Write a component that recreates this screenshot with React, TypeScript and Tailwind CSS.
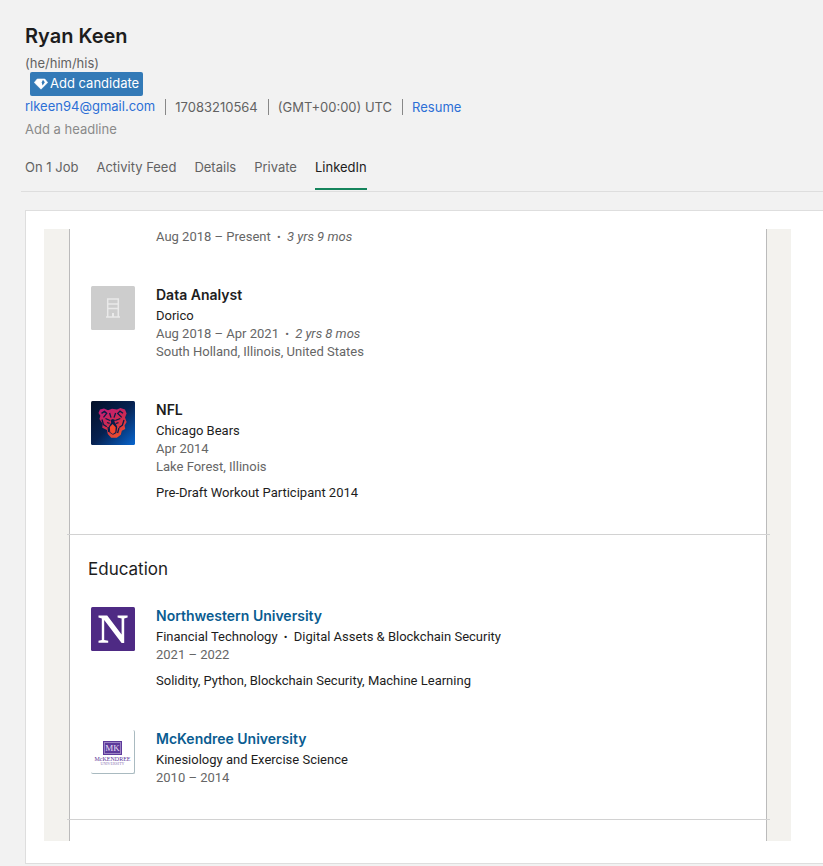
import type { ReactNode } from "react";

type Entry = {
  title: string;
  subtitle: ReactNode;
  dates: ReactNode;
  place?: string;
  note?: string;
  logo: ReactNode;
};

const Dot = () => <span className="px-[3px] text-[11px] leading-none">•</span>;

const GemIcon = () => (
  <svg viewBox="0 0 14 12" className="h-3 w-3.5" aria-hidden="true">
    <path d="M3.2 1h7.6L13.7 4.6 7 11.2.3 4.6z" fill="#fff" stroke="#fff" strokeWidth=".6" strokeLinejoin="round" />
    <path d="M9 1.8 10.8 4.3 8.6 7.4 7.7 4.4z" fill="#337ab7" />
  </svg>
);

const CompanyLogo = () => (
  <svg viewBox="0 0 44 44" className="size-11" role="img" aria-label="Dorico">
    <rect width="44" height="44" rx="1.5" fill="#cdcdcd" />
    <g fill="none" stroke="#e9e9e9" strokeWidth="1.5">
      <path d="M16.7 31V13h10.6v18M15 31h14M17 18h10M17 22.5h10" />
      <path d="M22 31v-4" strokeWidth="2" />
    </g>
  </svg>
);

const BearsLogo = () => (
  <svg viewBox="0 0 44 44" className="size-11" role="img" aria-label="Chicago Bears">
    <defs>
      <linearGradient id="night" x1="0" y1="0" x2="1" y2="1">
        <stop offset="0" stopColor="#041027" />
        <stop offset=".5" stopColor="#062150" />
        <stop offset="1" stopColor="#0866d0" />
      </linearGradient>
      <linearGradient id="fur" x1="0" y1="0" x2=".5" y2="1">
        <stop offset="0" stopColor="#c01b7c" />
        <stop offset=".6" stopColor="#cf2b50" />
        <stop offset="1" stopColor="#e84b32" />
      </linearGradient>
    </defs>
    <rect width="44" height="44" rx="1.5" fill="url(#night)" />
    <path
      fill="url(#fur)"
      d="M7.5 12 9 8.6 13 7.4l4 1.9 4-1.5 5 .6 3.4-1.4 4.6 1.6 1.6 4-1.6 3.8 1.6 4.6-2 3.4.6 3.5-3.4 1.8-1 4-4 3.1h-5.6l-3.4-3.7-.8-4-4.7-2.4.3-4L8.4 18l1-3.3z"
    />
    <path
      fill="none"
      stroke="#081c49"
      strokeWidth="1.3"
      d="m10.5 12.4 3-2 2.2 2-3.2 4M11 18.5l1.4 5 3.4 2.2M32 12.2l-3-2-2.3 2.2 4 4M33 19l-1.6 5.2-3.2 2.3M18.6 12l1.4 4.6M24.6 12l-1.6 4.6M14.5 17.5l4.6 2M29.3 17.5l-5 2M16 21.5l2.6.8M27.5 21.7l-2.7.8M17 26l.8 5M28 27l-1.4 5"
    />
    <path fill="#081c49" d="m19.6 19 2.2-1L24 19l-.6 1.8 1.8 3 1 2.2-.8 6-3.4 1.8-3.6-2.2-.8-5.4 2.6-4.6z" />
    <path fill="#f4482f" d="m18.8 26 2.8-3 3.1 3.2-.4 5-2.4 1.8-2.7-1.8z" />
  </svg>
);

const NorthwesternLogo = () => (
  <svg viewBox="0 0 44 44" className="size-11" role="img" aria-label="Northwestern University">
    <rect width="44" height="44" rx="1.5" fill="#4e2a84" />
    <path
      fill="#fff"
      d="M7.5 8.5h8.7L30.6 27.5V11.5l-4-.9V8.5h10v2.1l-3.4.9V36h-2.6L13.2 13v20l4 .7v2H7.5v-2l3.3-.8V11.5l-3.3-.9z"
    />
  </svg>
);

const McKendreeLogo = () => (
  <span className="flex size-11 flex-col items-center rounded-xs border-r border-b border-[#a9bac0] bg-white pt-[11px] font-['Liberation_Serif',serif] text-[#5b3598]">
    <span className="flex h-3.5 w-[19px] items-center justify-center bg-[#5d3a9b] text-[9px] leading-none text-[#e6dcf5] outline-1 -outline-offset-2 outline-[#9c84c4]">
      MK
    </span>
    <span className="mt-px text-[6px] leading-[6px]">McKENDREE</span>
    <span className="text-[4px] leading-[4px] text-[#8d75b5]">UNIVERSITY</span>
  </span>
);

const jobs: Entry[] = [
  {
    title: "Data Analyst",
    subtitle: "Dorico",
    dates: <>Aug 2018 – Apr 2021 <Dot /> <em>2 yrs 8 mos</em></>,
    place: "South Holland, Illinois, United States",
    logo: <CompanyLogo />,
  },
  {
    title: "NFL",
    subtitle: "Chicago Bears",
    dates: "Apr 2014",
    place: "Lake Forest, Illinois",
    note: "Pre-Draft Workout Participant 2014",
    logo: <BearsLogo />,
  },
];

const schools: Entry[] = [
  {
    title: "Northwestern University",
    subtitle: <>Financial Technology <Dot /> Digital Assets &amp; Blockchain Security</>,
    dates: "2021 – 2022",
    note: "Solidity, Python, Blockchain Security, Machine Learning",
    logo: <NorthwesternLogo />,
  },
  {
    title: "McKendree University",
    subtitle: "Kinesiology and Exercise Science",
    dates: "2010 – 2014",
    logo: <McKendreeLogo />,
  },
];

function EntryRow({ entry, linked = false }: { entry: Entry; linked?: boolean }) {
  return (
    <li className="flex gap-[21px]">
      <div className="shrink-0 pt-[3px]">{entry.logo}</div>
      <div>
        <h3 className="font-[Inter,sans-serif] text-sm leading-6 font-semibold">
          {linked ? <a href="#school" className="text-[#0a5c91]">{entry.title}</a> : entry.title}
        </h3>
        <p>{entry.subtitle}</p>
        <p className="text-[#666]">{entry.dates}</p>
        {entry.place && <p className="text-[#666]">{entry.place}</p>}
        {entry.note && <p className="mt-2">{entry.note}</p>}
      </div>
    </li>
  );
}

const tabs = ["On 1 Job", "Activity Feed", "Details", "Private", "LinkedIn"];

export default function App() {
  return (
    <div className="min-h-screen overflow-hidden bg-[#f2f2f2] pb-0.5 font-[Inter,sans-serif] text-[13px] text-[#1d1d1d]">
      <header className="pt-[22px] pl-[25px] text-[#626262]">
        <h1 className="text-xl leading-7 font-semibold text-[#1d1d1d]">Ryan Keen</h1>
        <p className="mt-1 leading-[18px]">(he/him/his)</p>
        <button className="ml-[5px] flex h-6 items-center gap-0.5 rounded-xs bg-[#337ab7] px-1 text-white">
          <GemIcon />
          Add candidate
        </button>
        <ul className="flex h-[22px] items-center">
          <li><a href="#email" className="text-[#2c6fd6]">rlkeen94@gmail.com</a></li>
          <li className="ml-2.5 border-l border-[#888] pl-[9px] leading-4">17083210564</li>
          <li className="ml-2.5 border-l border-[#888] pl-[9px] leading-4">(GMT+00:00) UTC</li>
          <li className="ml-2.5 border-l border-[#888] pl-[9px] leading-4"><a href="#resume" className="text-[#2c6fd6]">Resume</a></li>
        </ul>
        <p className="leading-[22px] text-[#8a8a8a]">Add a headline</p>
      </header>

      <nav className="mt-3 ml-[21px] flex gap-[18px] border-b border-[#dedede] pl-1 text-[#626262]">
        {tabs.map((tab) => (
          <a
            key={tab}
            href="#tab"
            aria-current={tab === "LinkedIn" ? "page" : undefined}
            className="mb-px border-b-2 border-transparent pt-1.5 pb-3 leading-[18px] aria-[current=page]:border-[#15845c] aria-[current=page]:text-[#1d1d1d]"
          >
            {tab}
          </a>
        ))}
      </nav>

      <main className="mt-[18px] ml-[25px] border-y border-l border-[#dedede] bg-white pt-[18px] pb-[22px] pl-[18px]">
        <div className="max-w-[747px] overflow-hidden bg-[#f3f2ee] pr-6 pl-[25px] font-[Roboto,sans-serif] leading-[18px]">
          <div className="border-x border-[#bbb] bg-white pb-[21px]">
            <section className="pb-8 pl-[21px]">
              <p className="-mt-px pl-[65px] text-[#666]">
                Aug 2018 – Present <Dot /> <em>3 yrs 9 mos</em>
              </p>
              <ul className="mt-[37px] flex flex-col gap-[37px]">
                {jobs.map((job) => <EntryRow key={job.title} entry={job} />)}
              </ul>
            </section>
            <hr className="-mr-1 -ml-[3px] border-[#d2d2d2]" />
            <section className="pt-5 pb-8 pl-[21px]">
              <h2 className="-ml-[3px] font-[Inter,sans-serif] text-[17px] leading-7">Education</h2>
              <ul className="mt-[21px] flex flex-col gap-[37px]">
                {schools.map((school) => <EntryRow key={school.title} entry={school} linked />)}
              </ul>
            </section>
            <hr className="-mr-1 -ml-[3px] border-[#d2d2d2]" />
          </div>
        </div>
      </main>
    </div>
  );
}
